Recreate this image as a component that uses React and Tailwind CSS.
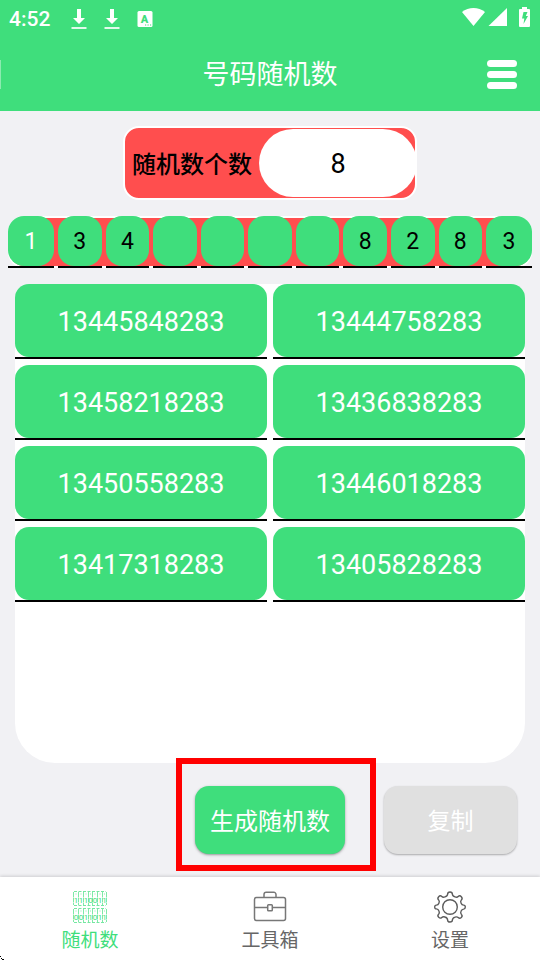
import React, { useState } from "react";

const initialPattern = ["1", "3", "4", "", "", "", "", "8", "2", "8", "3"];

const initialNumbers = [
  "13445848283",
  "13444758283",
  "13458218283",
  "13436838283",
  "13450558283",
  "13446018283",
  "13417318283",
  "13405828283",
];

const DownloadIcon = () => (
  <svg className="h-5 w-4" viewBox="0 0 16 20" fill="#fff">
    <path d="M6 0h4v9h4l-6 6-6-6h4z" />
    <path d="M0.500 18h15v2h-15z" opacity="0.85" />
  </svg>
);

const KeyboardIcon = () => (
  <svg className="h-4 w-4" viewBox="0 0 16 16">
    <rect x="0.500" y="0" width="15" height="16" rx="1.500" fill="#fff" />
    <text x="7.500" y="11.500" textAnchor="middle" fontSize="11" fontWeight="900" fill="#3fde7c" className="font-['Roboto',sans-serif]">A</text>
    <path d="M8 14h1.200M10.500 14h1.200M13 14h1.200" stroke="#3fde7c" strokeWidth="1.200" />
  </svg>
);

const StatusBar = () => (
  <div className="flex h-[37px] items-center pr-2.5 pl-[9px]">
    <span className="w-[62px] text-[21px] leading-6 font-medium">4:52</span>
    <div className="flex items-center gap-[17px]">
      <DownloadIcon />
      <DownloadIcon />
      <KeyboardIcon />
    </div>
    <div className="ml-auto flex items-center pb-1">
      <svg className="h-5 w-[23px]" viewBox="0 0 23 20" fill="#fff">
        <path d="M0 5C6.500-.2 16.500-.2 23 5L11.500 19z" />
      </svg>
      <svg className="ml-[3px] h-5 w-[19px]" viewBox="0 0 19 20" fill="#fff">
        <path d="M19 1v18H0.500z" />
      </svg>
      <svg className="ml-3 h-5 w-[11px]" viewBox="0 0 11 20">
        <path d="M3 0h5v2h2a1 1 0 0 1 1 1v16a1 1 0 0 1-1 1H1a1 1 0 0 1-1-1V3a1 1 0 0 1 1-1h2z" fill="#fff" />
        <path d="M4.500 5h4L6.800 9H9l-4.500 8 .8-5.500H3z" fill="#3fde7c" />
      </svg>
    </div>
  </div>
);

const RandomIcon = () => (
  <svg className="h-8 w-[34px]" viewBox="0 0 34 32" fill="none" stroke="#3fde7c">
    {[0, 17].map((y) => (
      <g key={y} transform={`translate(0 ${y})`}>
        <path d="M0.500 1v13M5.500 1v13M10.500 1v13M15.500 1v13M19.500 1v13M24.500 1v13M29.500 1v13M33.500 1v13" strokeWidth="0.900" strokeDasharray="5 0.500" opacity="0.750" />
        <path d="M1 0.500h32M1 14.500h32" strokeWidth="0.900" strokeDasharray="3 1.500" opacity="0.800" />
        <path d="M2.500 3h1M7.500 3h1M12.500 3h1M17 3h1M21.500 3h1M26.500 3h1M31 3h1" opacity="0.600" />
      </g>
    ))}
    <g fill="#3fde7c" stroke="none" fontSize="8" textAnchor="middle" className="font-['Roboto',sans-serif]">
      {[3, 8, 13, 17.5, 22, 27, 31.5].map((x, i) => (
        <React.Fragment key={x}>
          <text x={x} y="12">{"1110011"[i]}</text>
          <text x={x} y="29">{"0011011"[i]}</text>
        </React.Fragment>
      ))}
    </g>
  </svg>
);

const ToolboxIcon = () => (
  <svg className="h-8 w-[34px]" viewBox="0 0 34 32" fill="none" stroke="#777" strokeWidth="1.500">
    <rect x="1.500" y="6.500" width="31" height="23" rx="2" />
    <path d="M11 6V3.500A2.200 2.200 0 0 1 13.200 1.300h7.600A2.200 2.200 0 0 1 23 3.500V6" />
    <path d="M1.500 16.500h13M19.500 16.500h13" />
    <rect x="14.700" y="13.700" width="4.600" height="6" rx="0.800" />
  </svg>
);

const SettingsIcon = () => (
  <svg className="h-8 w-[34px]" viewBox="0 0 34 32" fill="none" stroke="#5c5c5c" strokeWidth="1.400" strokeLinejoin="round">
    <circle cx="17" cy="16" r="7.300" />
    {/* huit dents arrondies autour du cercle */}
    <path d="M14.600 3.200Q14.600 1 17 1t2.400 2.200q0 1.800 2.600 2.600 2 .9 3.200-.3 1.500-1.500 3.100.2t.1 3.200q-1.200 1.300-.4 3.100.8 2.100 2.600 2.100 1.700 0 1.700 1.900t-1.700 2.100q-1.800 0-2.600 2.200-.8 1.800.4 3.100 1.500 1.500-.1 3.100t-3.100.1q-1.200-1.200-3.200-.4-2.600.9-2.600 2.900Q19.400 31 17 31t-2.400-2.100q0-2-2.600-2.900-2-.8-3.200.4-1.500 1.500-3.100-.1t-.1-3.100q1.200-1.300.4-3.100-.8-2.200-2.600-2.200Q1.700 17.900 1.700 16t1.700-1.900q1.800 0 2.600-2.100.8-1.800-.4-3.100-1.500-1.500.1-3.200t3.100-.2q1.200 1.200 3.200.3 2.600-.8 2.600-2.600z" />
  </svg>
);

const tabs = [
  { label: "随机数", Icon: RandomIcon },
  { label: "工具箱", Icon: ToolboxIcon },
  { label: "设置", Icon: SettingsIcon },
];

const App = () => {
  const [count, setCount] = useState("8");
  const [pattern, setPattern] = useState(initialPattern);
  const [numbers, setNumbers] = useState(initialNumbers);
  const [activeTab, setActiveTab] = useState(0);

  const handleDigitChange = (index, value) => {
    setPattern(pattern.map((digit, i) => (i === index ? value : digit)));
  };

  // Les cases vides sont remplies avec un chiffre au hasard
  const generate = () => {
    const total = parseInt(count) || 0;
    setNumbers(
      Array.from({ length: total }, () =>
        pattern.map((digit) => digit || Math.floor(Math.random() * 10)).join("")
      )
    );
  };

  return (
    <div className="relative flex min-h-screen flex-col bg-[#f1f1f4] font-['Roboto','Noto_Sans_CJK_SC',sans-serif] text-black">
      <header className="bg-[#3fde7c] text-white">
        <StatusBar />
        <div className="grid h-[74px] grid-cols-[1fr_auto_1fr] items-center">
          <div className="h-[29px] w-px bg-white/40" />
          <h1 className="pt-0.5 text-[27px] leading-8">号码随机数</h1>
          <button aria-label="菜单" className="mr-[23px] flex w-[30px] flex-col gap-1 justify-self-end">
            <span className="h-[7px] w-full rounded-sm bg-white" />
            <span className="h-[7px] w-full rounded-sm bg-white" />
            <span className="h-[7px] w-full rounded-sm bg-white" />
          </button>
        </div>
      </header>

      <main className="flex flex-1 flex-col">
        <div className="mt-[15px] flex items-center self-center rounded-2xl border-2 border-white bg-[#ff4e4e] py-px pl-[7px]">
          <label htmlFor="count" className="mr-[7px] pt-1 text-2xl font-medium">随机数个数</label>
          <input
            id="count"
            className="-mr-0.5 h-[68px] w-[158px] rounded-full bg-white pt-0.5 text-center text-[27px]"
            value={count}
            onChange={(e) => setCount(e.target.value)}
          />
        </div>

        {/* les onze chiffres du numéro */}
        <div className="mx-2 mt-4 rounded-2xl border-2 border-white bg-[#ff4e4e]">
          <div className="-m-0.5 flex gap-1">
            {pattern.map((digit, index) => (
              <div
                key={index}
                className="min-w-0 flex-1 border-b-2 border-black first:w-[46px] first:flex-none last:w-[46px] last:flex-none"
              >
                <input
                  aria-label={`第${index + 1}位`}
                  maxLength={1}
                  readOnly={index === 0}
                  className={`block h-[50px] w-full rounded-2xl bg-[#3fde7c] text-center text-[23px] ${index === 0 ? "text-white" : "text-black"}`}
                  value={digit}
                  onChange={(e) => handleDigitChange(index, e.target.value)}
                />
              </div>
            ))}
          </div>
        </div>

        <div className="mx-[15px] mt-4 flex-1 rounded-[40px] bg-white">
          <ul className="grid grid-cols-2 gap-1.5">
            {numbers.map((number, index) => (
              <li key={index} className="border-b-2 border-black">
                <div className="flex h-[73px] items-center justify-center rounded-[14px] bg-[#3fde7c] pt-1 text-[27px] text-white">
                  {number}
                </div>
              </li>
            ))}
          </ul>
        </div>

        <div className="my-[23px] mr-[23px] flex justify-end gap-[39px]">
          <div className="relative">
            <button
              onClick={generate}
              className="h-[68px] w-[150px] rounded-[14px] bg-[#3fde7c] pt-1 text-2xl text-white shadow-sm shadow-black/30"
            >
              生成随机数
            </button>
            <div className="pointer-events-none absolute -top-7 -right-[31px] -bottom-[17px] -left-[19px] border-6 border-[#ff0000]" />
          </div>
          <button disabled className="h-[68px] w-[133px] rounded-[14px] bg-[#e0e0e0] pt-1 text-[23px] text-white shadow-xs shadow-black/30">
            复制
          </button>
        </div>
      </main>

      <nav className="grid h-[83px] grid-cols-3 bg-white shadow-[0_-1px_3px_rgba(0,0,0,0.15)]">
        {tabs.map(({ label, Icon }, index) => (
          <button
            key={label}
            onClick={() => setActiveTab(index)}
            className={`flex flex-col items-center gap-1.5 pt-3.5 text-[19px] leading-6 ${index === activeTab ? "text-[#3fde7c]" : "text-[#666]"}`}
          >
            <Icon />
            {label}
          </button>
        ))}
      </nav>
      <svg className="absolute bottom-0 left-0 h-1 w-1" viewBox="0 0 4 4">
        <path d="M0 0h1v1H0zM1 2h1v1H1zM2 3h2v1H2z" />
      </svg>
    </div>
  );
};

export default App;
